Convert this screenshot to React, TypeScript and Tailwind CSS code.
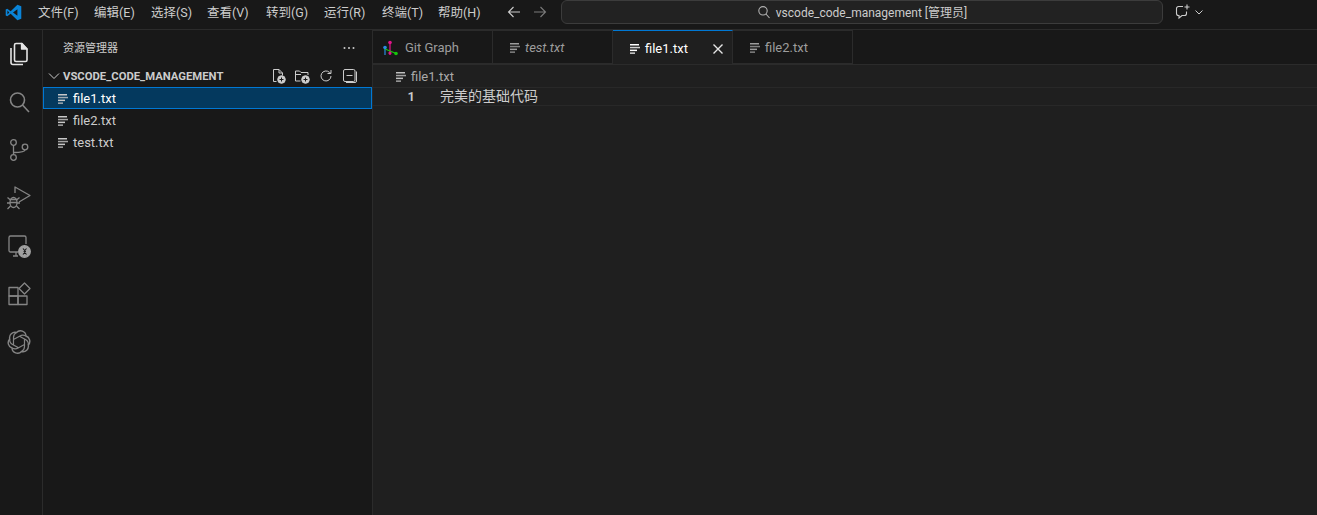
import React from "react";

const font = { fontFamily: 'Roboto,"Noto Sans CJK SC",sans-serif' };

function Lines({ className = "" }: { className?: string }) {
  return (
    <svg viewBox="0 0 10 10" className={"w-[10px] h-[10px] shrink-0 " + className} fill="currentColor">
      <rect x="0" y="0" width="9" height="1.5" />
      <rect x="0" y="2.8" width="10" height="1.5" opacity="0.8" />
      <rect x="0" y="5.6" width="7" height="1.5" />
      <rect x="0" y="8.400" width="5" height="1.5" opacity="0.8" />
    </svg>
  );
}

function ActIcon({ children, active }: { children: React.ReactNode; active?: boolean }) {
  return (
    <div className="h-[48px] w-full flex items-center justify-center">
      <svg
        viewBox="0 0 24 24"
        className={"w-[24px] h-[24px] " + (active ? "text-[#e4e4e4]" : "text-[#858585]")}
        fill="none"
        stroke="currentColor"
        strokeWidth="1.3"
        strokeLinejoin="round"
      >
        {children}
      </svg>
    </div>
  );
}

function Tab({ label, italic, active, git }: { label: string; italic?: boolean; active?: boolean; git?: boolean }) {
  return (
    <div
      className={
        "w-[120px] h-full flex items-center border-r border-[#2b2b2b] relative text-[13px] pt-[2px] " +
        (active
          ? "bg-[#1f1f1f] text-white border-t border-t-[#0078d4] pl-[17px]"
          : "bg-[#181818] text-[#9d9d9d] border-t border-t-[#2b2b2b] border-b border-b-[#2b2b2b] " + (git ? "pl-[10px]" : "pl-[17px]"))
      }
    >
      {git ? (
        <svg viewBox="0 0 16 16" className="w-[16px] h-[16px] mr-[6px] shrink-0" fill="none">
          <path d="M7 1v14" stroke="#e2148c" strokeWidth="1.2" />
          <path d="M2 7v8" stroke="#2a8fe0" strokeWidth="1.2" />
          <path d="M2 9l10 4" stroke="#16c60c" strokeWidth="1.2" />
          <circle cx="7" cy="2.5" r="1.8" fill="#e2148c" />
          <circle cx="2" cy="7.5" r="1.8" fill="#2a8fe0" />
          <circle cx="7" cy="13" r="1.6" fill="#e2148c" />
          <circle cx="13" cy="13.5" r="1.8" fill="#16c60c" />
        </svg>
      ) : (
        <Lines className="mr-[5px]" />
      )}
      <span className={italic ? "italic" : ""}>{label}</span>
      {active && (
        <svg viewBox="0 0 12 12" className="w-[12px] h-[12px] ml-auto mr-[8px]" fill="none" stroke="#e6e6e6" strokeWidth="1.4">
          <path d="M1.5 1.5l9 9M10.500 1.500l-9 9" />
        </svg>
      )}
    </div>
  );
}

function Row({ label, selected }: { label: string; selected?: boolean }) {
  return (
    <div
      className={
        "h-[22px] flex items-center pl-[14px] pt-[2px] text-[13px] border " +
        (selected ? "bg-[#04395e] border-[#0078d4] text-white" : "border-transparent text-[#cccccc]")
      }
    >
      <Lines className="mr-[5px] text-[#c8c8c8]" />
      <span>{label}</span>
    </div>
  );
}

function Tool({ children }: { children: React.ReactNode }) {
  return (
    <svg viewBox="0 0 16 16" className="w-[16px] h-[16px]" fill="none" stroke="#cccccc" strokeWidth="1" strokeLinejoin="round">
      {children}
    </svg>
  );
}

export default function App() {
  const menus = [
    ["文件(F)", "w-[56px]"],
    ["编辑(E)", "w-[57px]"],
    ["选择(S)", "w-[56px]"],
    ["查看(V)", "w-[59px]"],
    ["转到(G)", "w-[58px]"],
    ["运行(R)", "w-[58px]"],
    ["终端(T)", "w-[56px]"],
    ["帮助(H)", "w-[60px]"],
  ];
  return (
    <div style={font} className="w-[1317px] h-[515px] overflow-hidden bg-[#1f1f1f] flex flex-col text-[#cccccc]">
      <div className="h-[30px] shrink-0 bg-[#181818] border-b border-[#2b2b2b] flex items-center pb-[5px]">
        <div className="w-[38px] shrink-0 flex justify-center pr-[12px]">
          <svg viewBox="0 0 24 24" className="w-[17px] h-[17px]" fill="#0a84d8">
            <path d="M17.500 1L8 10.300 3.200 6.600 1 7.700v8.600l2.200 1.100L8 13.700l9.500 9.300 5.500-2.300V3.300L17.500 1zm0 6.300v9.400L11.300 12l6.200-4.700zM3.400 9.200L6 12l-2.600 2.800V9.200z" />
          </svg>
        </div>
        <div className="flex text-[12.5px] pt-[3px] text-[#cccccc] w-[465px] shrink-0">
          {menus.map(([m, w]) => (
            <div key={m} className={w + " whitespace-nowrap"}>{m}</div>
          ))}
        </div>
        <div className="flex items-center gap-[12px] w-[58px] shrink-0 pl-[4px]">
          <svg viewBox="0 0 14 14" className="w-[14px] h-[14px]" fill="none" stroke="#cccccc" strokeWidth="1.1">
            <path d="M13 7H1.500M6.500 2l-5 5 5 5" />
          </svg>
          <svg viewBox="0 0 14 14" className="w-[14px] h-[14px]" fill="none" stroke="#7a7a7a" strokeWidth="1.1">
            <path d="M1 7h11.500M7.500 2l5 5-5 5" />
          </svg>
        </div>
        <div className="w-[602px] h-[24px] shrink-0 rounded-[6px] bg-[#222222] border border-[#3c3c3c] flex items-center justify-center gap-[5px] text-[12px] text-[#cccccc]">
          <svg viewBox="0 0 14 14" className="w-[14px] h-[14px]" fill="none" stroke="#b0b0b0" strokeWidth="1.1">
            <circle cx="6" cy="5.800" r="4.200" />
            <path d="M9 9l3.500 4" />
          </svg>
          <span className="pt-[2px]">vscode_code_management [管理员]</span>
        </div>
        <div className="flex items-center ml-[12px] gap-[3px]">
          <svg viewBox="0 0 16 16" className="w-[16px] h-[16px]" fill="none" stroke="#cccccc" strokeWidth="1.1">
            <path d="M8 2.500H3.500A2 2 0 0 0 1.500 4.500v5a2 2 0 0 0 2 2H4v2.500l3-2.500h2.500a2 2 0 0 0 2-2V7.500" />
            <path d="M12 0.500v5M9.500 3h5" />
          </svg>
          <svg viewBox="0 0 10 10" className="w-[10px] h-[10px]" fill="none" stroke="#cccccc" strokeWidth="1">
            <path d="M1.500 3.500L5 7l3.500-3.500" />
          </svg>
        </div>
      </div>

      <div className="flex flex-1 min-h-0">
        <div className="w-[43px] shrink-0 bg-[#181818] border-r border-[#2b2b2b] pr-[5px]">
          <div className="flex flex-col">
            <ActIcon active>
              <path d="M7.500 3a1.500 1.500 0 0 1 1.500-1.500h6l5 5.500v11a1.500 1.500 0 0 1-1.500 1.500H9A1.500 1.500 0 0 1 7.500 18V3z" strokeWidth="1.600" />
              <path d="M14.500 1.500V7h5.500z" fill="currentColor" />
              <path d="M4 6v14.500A2 2 0 0 0 6 22.500h10" strokeWidth="1.600" />
            </ActIcon>
            <ActIcon>
              <circle cx="10.500" cy="10" r="7" strokeWidth="1.600" />
              <path d="M15.500 15l6.500 7" strokeWidth="1.600" />
            </ActIcon>
            <ActIcon>
              <circle cx="6.500" cy="4.500" r="2.800" />
              <circle cx="6.500" cy="19.500" r="2.800" />
              <circle cx="18" cy="9" r="2.800" />
              <path d="M6.500 7.300v9.400M6.500 14.500c7 0 11.500-.5 11.500-2.700" />
            </ActIcon>
            <ActIcon>
              <path d="M8 7V1l15 8.500-11 6.500" />
              <ellipse cx="6.500" cy="16.500" rx="3.500" ry="5" />
              <path d="M0.500 11.500l3 2.500M12.500 11.500l-3 2.500M0 17h3M10 17h3M0.500 23l3-3M12.500 23l-3-3M3 13.500h7M3 16.500h7" />
            </ActIcon>
            <ActIcon>
              <path d="M11 18H3.500A1.500 1.500 0 0 1 2 16.500V3.500A1.500 1.500 0 0 1 3.500 2h14A1.500 1.500 0 0 1 19 3.500V10M6 22h5M9 18v4" />
              <circle cx="17.500" cy="17.500" r="5.800" fill="#a0a0a0" stroke="#a0a0a0" />
              <path d="M16 14.500l2.500 3-2.500 3M19.500 14.500l-2.500 3 2.500 3" stroke="#181818" strokeWidth="1.100" />
            </ActIcon>
            <ActIcon>
              <rect x="2" y="5.500" width="9" height="8.500" />
              <rect x="2" y="14" width="9" height="8.500" />
              <rect x="11" y="14" width="9" height="8.500" />
              <path d="M17.500 1l5.500 5.500-5.500 5.500-5.500-5.500z" />
            </ActIcon>
            <ActIcon>
              <path d="M9.500 2.500a5.500 5.500 0 0 1 9.500 3.500 5.500 5.500 0 0 1 2.300 9 5.500 5.500 0 0 1-6.800 6.500 5.500 5.500 0 0 1-9.500-3.500 5.500 5.500 0 0 1-2.300-9 5.500 5.500 0 0 1 6.800-6.500z" strokeWidth="1.400" />
              <path d="M9.500 2.500C7.500 3.500 6.500 5.500 6.500 7.500v7.500l5.500 3M19 6c-2-1-4.500-1-6 0L6.500 9.500M21.300 15c.2-2-1-4.500-2.800-5.500L12 6M14.500 21.500c2-1 3-3 3-5V9M5 18c2 1 4.500 1 6 0l6.500-3.500M2.700 9c-.2 2 1 4.500 2.800 5.500L12 18" strokeWidth="1.200" />
            </ActIcon>
          </div>
        </div>

        <div className="w-[330px] shrink-0 bg-[#181818] border-r border-[#2b2b2b] flex flex-col">
          <div className="h-[35px] flex items-center justify-between pl-[20px] pr-[15px] text-[11px] text-[#cccccc]">
            <span className="pt-[4px]">资源管理器</span>
            <svg viewBox="0 0 16 16" className="w-[16px] h-[16px]" fill="#cccccc">
              <circle cx="3.500" cy="8" r="1" />
              <circle cx="8" cy="8" r="1" />
              <circle cx="12.500" cy="8" r="1" />
            </svg>
          </div>
          <div className="h-[22px] flex items-center pl-[3px] pr-[14px] text-[11.3px] font-bold text-[#cccccc]">
            <svg viewBox="0 0 16 16" className="w-[16px] h-[16px] mr-[1px] shrink-0" fill="none" stroke="#cccccc" strokeWidth="1">
              <path d="M3 5.500l5 5 5-5" />
            </svg>
            <span className="pt-[2px]">VSCODE_CODE_MANAGEMENT</span>
            <div className="ml-auto flex gap-[8px]">
              <Tool>
                <path d="M6.500 13.500H3.500V1.500h5.500l3.500 3.500v2.500M9 1.500V5h3.500" />
                <circle cx="11.500" cy="11.500" r="3.800" fill="#cccccc" />
                <path d="M11.500 9.500v4M9.500 11.500h4" stroke="#181818" />
              </Tool>
              <Tool>
                <path d="M6.500 13H1.500V3h4l1.500 1.500h7V7M1.500 6.500H7" />
                <circle cx="11.500" cy="11.500" r="3.800" fill="#cccccc" />
                <path d="M11.500 9.500v4M9.500 11.500h4" stroke="#181818" />
              </Tool>
              <Tool>
                <path d="M13 8a5 5 0 1 1-1.600-3.700L13 5.500" />
                <path d="M13 2v3.500H9.500" />
              </Tool>
              <Tool>
                <rect x="1.500" y="1.500" width="11.500" height="12" rx="1.500" />
                <path d="M4.500 7.500h6M14.500 3.500v9.500a1.500 1.500 0 0 1-1.500 1.500H4" />
              </Tool>
            </div>
          </div>
          <Row label="file1.txt" selected />
          <Row label="file2.txt" />
          <Row label="test.txt" />
        </div>

        <div className="flex-1 min-w-0 flex flex-col bg-[#1f1f1f]">
          <div className="h-[35px] shrink-0 flex bg-[#181818] border-b border-[#2b2b2b]">
            <Tab label="Git Graph" git />
            <Tab label="test.txt" italic />
            <Tab label="file1.txt" active />
            <Tab label="file2.txt" />
          </div>
          <div className="h-[22px] shrink-0 flex items-center pl-[23px] pt-[1px] text-[13px] text-[#a9a9a9]">
            <Lines className="mr-[5px] text-[#c0c0c0]" />
            <span>file1.txt</span>
          </div>
          <div className="h-[19px] shrink-0 flex items-center border-y border-[#282828]">
            <div className="w-[42px] text-right text-[13px] font-semibold text-[#cccccc]">1</div>
            <div className="pl-[25px] text-[14px] text-[#cccccc]">完美的基础代码</div>
          </div>
        </div>
      </div>
    </div>
  );
}
